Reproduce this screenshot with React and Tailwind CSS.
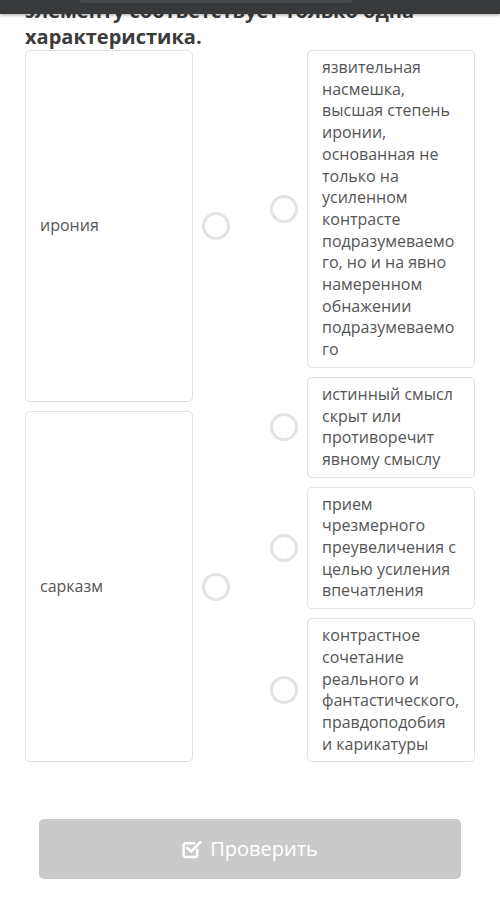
import React from 'react';

const font = { fontFamily: '"Open Sans", "Noto Sans", sans-serif' };

const Radio = () => (
    <div className="w-[28px] h-[28px] rounded-full border-[3px] border-[#e3e3e3] bg-white shrink-0" />
);

const Card = ({ children, className = '' }) => (
    <div className={`border border-[#e2e2e2] rounded-[5px] bg-white px-[14px] py-[6px] text-[16px] leading-[21.7px] text-[#555] break-words ${className}`}>
        {children}
    </div>
);

const answers = [
    'язвительная насмешка, высшая степень иронии, основанная не только на усиленном контрасте подразумеваемого, но и на явно намеренном обнажении подразумеваемого',
    'истинный смысл скрыт или противоречит явному смыслу',
    'прием чрезмерного преувеличения с целью усиления впечатления',
    'контрастное сочетание реального и фантастического, правдоподобия и\u00a0карикатуры',
];

const CheckIcon = () => (
    <svg width="20" height="20" viewBox="0 0 19 19" fill="none" stroke="white" strokeWidth="2.4" strokeLinecap="round" strokeLinejoin="round">
        <path d="M14.5 10.5v4.5a2 2 0 0 1-2 2h-9a2 2 0 0 1-2-2v-9a2 2 0 0 1 2-2h8" />
        <path d="M5 8.5l3.5 3.5 9-9" />
    </svg>
);

const App = () => {
    return (
        <div className="relative w-[500px] h-[911px] bg-white overflow-hidden" style={font}>
            <div className="absolute top-0 left-0 right-0 h-[14px] bg-[#37393b] shadow-[0_1px_3px_rgba(0,0,0,0.35)] z-10">
                <div className="ml-[80px] w-[273px] h-[3px] bg-[#474a4d] rounded-b-[4px]" />
            </div>
            <div className="px-[25px]">
                <h2 className="mt-[-2px] text-[20px] leading-[26px] font-bold text-[#3b3b3b]">
                    элементу соответствует только одна характеристика.
                </h2>
                <div className="flex">
                    <div className="w-[168px] flex flex-col gap-[9px]">
                        <Card className="flex-1 flex items-center">ирония</Card>
                        <Card className="flex-1 flex items-center">сарказм</Card>
                    </div>
                    <div className="flex flex-col gap-[9px] ml-[9px]">
                        <div className="flex-1 flex items-center"><Radio /></div>
                        <div className="flex-1 flex items-center"><Radio /></div>
                    </div>
                    <div className="flex flex-col gap-[9px] ml-[40px]">
                        {answers.map((a, i) => (
                            <div key={i} className="flex items-center">
                                <Radio />
                                <Card className="ml-[9px] w-[168px]">{a}</Card>
                            </div>
                        ))}
                    </div>
                </div>
                <button className="mt-[57px] mx-[14px] w-[422px] h-[60px] rounded-[5px] bg-[#cacaca] text-white text-[20px] flex items-center justify-center gap-[8px]">
                    <CheckIcon />
                    <span>Проверить</span>
                </button>
            </div>
        </div>
    );
};

export default App;
